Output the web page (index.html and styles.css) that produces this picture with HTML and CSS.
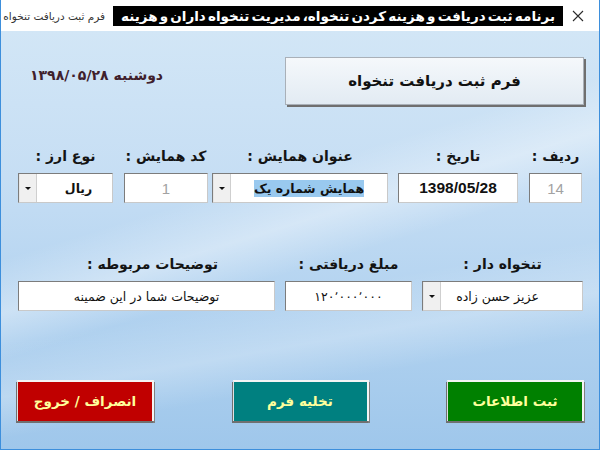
FILE: index.html
```html
<!DOCTYPE html>
<html lang="fa" dir="rtl">
<head>
<meta charset="utf-8">
<title>فرم ثبت دریافت تنخواه</title>
<link rel="stylesheet" href="styles.css">
</head>
<body>
<div class="window">
  <div class="titlebar">
    <span class="close"><svg width="12" height="12" viewBox="0 0 12 12"><path d="M1 1L11 11M11 1L1 11" stroke="#2b2b2b" stroke-width="1.1" fill="none"/></svg></span>
    <span class="marquee">برنامه ثبت دریافت و هزینه کردن تنخواه، مدیریت تنخواه داران و هزینه</span>
    <span class="wintitle">فرم ثبت دریافت تنخواه</span>
  </div>
  <div class="client">
    <div class="header">
      <div class="formtitle">فرم ثبت دریافت تنخواه</div>
      <div class="today">دوشنبه <span dir="ltr">۱۳۹۸/۰۵/۲۸</span></div>
    </div>

    <div class="row row1">
      <div class="group g-radif">
        <div class="label">ردیف :</div>
        <div class="box gray">14</div>
      </div>
      <div class="group g-tarikh">
        <div class="label">تاریخ :</div>
        <div class="box latin">1398/05/28</div>
      </div>
      <div class="group g-onvan">
        <div class="label">عنوان همایش :</div>
        <div class="box combo"><span class="val"><span class="sel">همایش شماره یک</span></span><span class="drop"><i></i></span></div>
      </div>
      <div class="group g-kod">
        <div class="label">کد همایش :</div>
        <div class="box gray">1</div>
      </div>
      <div class="group g-arz">
        <div class="label">نوع ارز :</div>
        <div class="box combo"><span class="val bold">ریال</span><span class="drop"><i></i></span></div>
      </div>
    </div>

    <div class="row row2">
      <div class="group g-tankhah">
        <div class="label">تنخواه دار :</div>
        <div class="box combo"><span class="val pr">عزیز حسن زاده</span><span class="drop"><i></i></span></div>
      </div>
      <div class="group g-mablagh">
        <div class="label">مبلغ دریافتی :</div>
        <div class="box"><span dir="ltr">۱۲۰٬۰۰۰٬۰۰۰</span></div>
      </div>
      <div class="group g-tozih">
        <div class="label">توضیحات مربوطه :</div>
        <div class="box">توضیحات شما در این ضمینه</div>
      </div>
    </div>

    <div class="actions">
      <div class="btn green">ثبت اطلاعات</div>
      <div class="btn teal">تخلیه فرم</div>
      <div class="btn red">انصراف / خروج</div>
    </div>
  </div>
</div>
</body>
</html>
```

FILE: styles.css
```css
* { box-sizing: border-box; }
html, body { margin: 0; padding: 0; }
body {
  width: 600px;
  height: 450px;
  overflow: hidden;
  font-family: "Liberation Sans", "DejaVu Sans", sans-serif;
  color: #111;
}
.window {
  width: 600px;
  height: 450px;
  display: flex;
  flex-direction: column;
  border: 1px solid #3d8fdc;
  border-top: none;
  background: #fff;
}
.titlebar {
  height: 31px;
  flex: none;
  display: flex;
  align-items: center;
  background: #fff;
}
.close {
  flex: none;
  width: 12px;
  height: 12px;
  margin-right: 15px;
  margin-left: 9px;
  display: flex;
}
.marquee {
  flex: none;
  width: 450px;
  height: 20px;
  background: #000;
  color: #fff;
  font-family: "DejaVu Sans", sans-serif;
  font-weight: bold;
  font-size: 13.5px;
  line-height: 20px;
  white-space: nowrap;
  overflow: hidden;
  text-align: center;
  margin-left: 8px;
  word-spacing: -2.5px;
}
.wintitle {
  flex: none;
  font-family: "DejaVu Sans", sans-serif;
  font-size: 10.5px;
  color: #333;
  white-space: nowrap;
}
.client {
  flex: 1;
  padding: 26px 15px 0 16px;
  background:
    linear-gradient(163deg, rgba(255,255,255,0) 38%, rgba(255,255,255,0.35) 47%, rgba(255,255,255,0) 55%),
    linear-gradient(170deg, rgba(255,255,255,0) 60%, rgba(255,255,255,0.25) 70%, rgba(255,255,255,0) 78%),
    linear-gradient(180deg, #d2e6f6 0%, #c6def4 35%, #b3d3f0 65%, #9fc7eb 100%);
}
.header {
  display: flex;
  align-items: flex-start;
  justify-content: space-between;
}
.formtitle {
  width: 299px;
  height: 48px;
  border: 1px solid #a9b0b8;
  background: linear-gradient(180deg, #f5f8fb, #e2ebf3);
  box-shadow: 2px 2px 0 #6f6f6f;
  font-family: "DejaVu Sans", sans-serif;
  font-weight: bold;
  font-size: 15px;
  line-height: 46px;
  text-align: center;
  color: #111;
}
.today {
  margin-top: 8px;
  padding-left: 13px;
  font-family: "DejaVu Sans", sans-serif;
  font-weight: bold;
  font-size: 14px;
  line-height: 20px;
  color: #40202c;
}
.row {
  display: flex;
}
.row1 { margin-top: 40px; padding-right: 2px; }
.row2 { margin-top: 50px; padding-right: 1px; }
.group {
  display: flex;
  flex-direction: column;
}
.label {
  height: 22px;
  line-height: 22px;
  text-align: center;
  font-family: "DejaVu Sans", sans-serif;
  font-weight: bold;
  font-size: 14px;
  color: #141414;
  white-space: nowrap;
  margin-bottom: 6px;
}
.g-radif { width: 53px; margin-left: 11px; }
.g-tarikh { width: 120px; margin-left: 10px; }
.g-onvan { width: 176px; margin-left: 4px; }
.g-kod { width: 84px; margin-left: 11px; }
.g-arz { width: 95px; }
.g-tankhah { width: 161px; margin-left: 10px; }
.g-mablagh { width: 127px; margin-left: 10px; }
.g-tozih { width: 257px; }
.g-tozih .label { padding-left: 12px; }

.box {
  height: 30px;
  background: #fff;
  border: 1px solid;
  border-color: #7c7c7c #c9c9c9 #c9c9c9 #7c7c7c;
  display: flex;
  align-items: center;
  justify-content: center;
  font-family: "DejaVu Sans", sans-serif;
  font-size: 12.5px;
  color: #111;
  white-space: nowrap;
}
.box.gray {
  font-family: "Liberation Sans", sans-serif;
  font-size: 15px;
  color: #a2a2a2;
}
.box.latin {
  font-family: "Liberation Sans", sans-serif;
  font-weight: bold;
  font-size: 15.5px;
}
.combo {
  justify-content: flex-start;
}
.combo .val {
  flex: 1;
  text-align: center;
}
.combo .val.bold { font-weight: bold; padding-left: 8px; }
.combo .val.pr { padding-right: 28px; }
.sel {
  background: #99c9ef;
  font-weight: bold;
  padding: 1px 0;
}
.drop {
  width: 18px;
  align-self: stretch;
  background: #f0f0f0;
  border-right: 1px solid #cfcfcf;
  border-left: 1px solid #e6e6e6;
  display: flex;
  align-items: center;
  justify-content: center;
}
.drop i {
  width: 0;
  height: 0;
  border-left: 3px solid transparent;
  border-right: 3px solid transparent;
  border-top: 3px solid #111;
}

.actions {
  margin-top: 69px;
  display: flex;
  justify-content: space-between;
}
.btn {
  width: 137px;
  height: 41px;
  border-top: 2px solid #f4f4f4;
  border-right: 2px solid #f4f4f4;
  border-left: 1px solid #e0e0e0;
  box-shadow: -1px 2px 0 #707070, 1px 2px 0 #808080;
  font-family: "DejaVu Sans", sans-serif;
  font-weight: bold;
  font-size: 13.5px;
  line-height: 38px;
  text-align: center;
  color: #ffff9c;
}
.btn.green { background: #008000; }
.btn.teal { background: #008080; width: 136px; }
.btn.red { background: #c00000; }
```
